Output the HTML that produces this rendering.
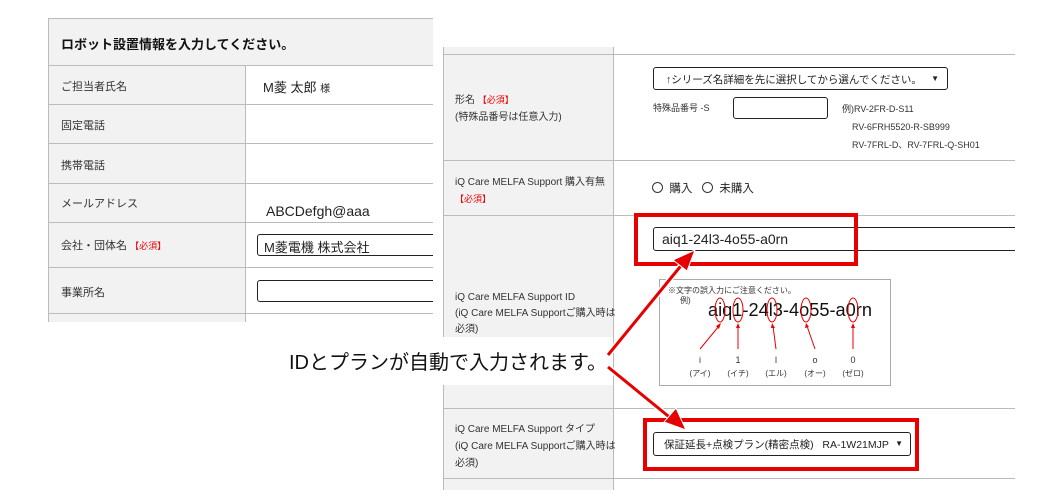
<!DOCTYPE html>
<html><head><meta charset="utf-8"><style>
*{margin:0;padding:0;box-sizing:border-box}
body{width:1060px;height:500px;background:#fff;position:relative;overflow:hidden;font-family:"Liberation Sans","Noto Sans CJK JP",sans-serif;color:#222}
.a{position:absolute}
.g{background:#f2f2f2}
.hl{position:absolute;height:1px;background:#bbb}
.vl{position:absolute;width:1px;background:#bbb}
.s{font-size:11px;color:#333}
.r{color:#e00;font-size:9px}
.box{position:absolute;border:1px solid #222;border-radius:3px;background:#fff}
.red{position:absolute;border:4px solid #e60000}
.clip{position:absolute;overflow:hidden}
</style></head><body>
<!-- left panel -->
<div class="clip" style="left:0;top:0;width:433px;height:322px">
<div class="a g" style="left:48px;top:18px;width:385px;height:304px"></div>
<div class="a" style="left:246px;top:65px;width:187px;height:257px;background:#fff"></div>
<div class="a" style="left:48px;top:18px;width:385px;height:1px;background:#bbb"></div>
<div class="vl" style="left:48px;top:18px;height:304px"></div>
<div class="vl" style="left:245px;top:65px;height:257px"></div>
<div class="hl" style="left:48px;top:65px;width:385px"></div>
<div class="hl" style="left:48px;top:104px;width:385px"></div>
<div class="hl" style="left:48px;top:143px;width:385px"></div>
<div class="hl" style="left:48px;top:183px;width:385px"></div>
<div class="hl" style="left:48px;top:222px;width:385px"></div>
<div class="hl" style="left:48px;top:267px;width:385px"></div>
<div class="hl" style="left:48px;top:313px;width:385px"></div>
<div class="a" style="left:61px;top:34px;font-size:13px;font-weight:bold;color:#111">ロボット設置情報を入力してください。</div>
<div class="a s" style="left:61px;top:78px">ご担当者氏名</div>
<div class="a" style="left:263px;top:77px;font-size:13px">M菱 太郎 <span style="font-size:10px">様</span></div>
<div class="a s" style="left:61px;top:117px">固定電話</div>
<div class="a s" style="left:61px;top:157px">携帯電話</div>
<div class="a s" style="left:61px;top:195px">メールアドレス</div>
<div class="a" style="left:266px;top:203px;font-size:14px">ABCDefgh@aaa</div>
<div class="a s" style="left:61px;top:237px">会社・団体名 <span class="r">【必須】</span></div>
<div class="box" style="left:257px;top:234px;width:230px;height:22px;font-size:13px;padding:2px 6px">M菱電機 株式会社</div>
<div class="a s" style="left:61px;top:284px">事業所名</div>
<div class="box" style="left:257px;top:280px;width:230px;height:22px"></div>
</div>

<!-- right panel -->
<div class="clip" style="left:0;top:0;width:1015px;height:500px">
<div class="a g" style="left:443px;top:47px;width:170px;height:443px"></div>
<div class="vl" style="left:443px;top:47px;height:443px"></div>
<div class="vl" style="left:613px;top:47px;height:443px"></div>
<div class="hl" style="left:443px;top:54px;width:572px"></div>
<div class="hl" style="left:443px;top:160px;width:572px"></div>
<div class="hl" style="left:443px;top:215px;width:572px"></div>
<div class="hl" style="left:443px;top:408px;width:572px"></div>
<div class="hl" style="left:443px;top:478px;width:572px"></div>

<div class="a" style="left:455px;top:92px;font-size:10px;line-height:17px;color:#333">形名 <span class="r">【必須】</span><br>(特殊品番号は任意入力)</div>
<div class="box" style="left:653px;top:67px;width:295px;height:23px;font-size:10.5px;padding:4px 12px">↑シリーズ名詳細を先に選択してから選んでください。<span style="position:absolute;right:8px;top:6px;font-size:8px">▼</span></div>
<div class="a" style="left:653px;top:101px;font-size:9px;color:#333">特殊品番号 -S</div>
<div class="box" style="left:733px;top:97px;width:95px;height:22px"></div>
<div class="a" style="left:842px;top:100px;font-size:9px;line-height:18px;color:#333">例)RV-2FR-D-S11<br>&nbsp;&nbsp;&nbsp;&nbsp;RV-6FRH5520-R-SB999<br>&nbsp;&nbsp;&nbsp;&nbsp;RV-7FRL-D、RV-7FRL-Q-SH01</div>

<div class="a" style="left:455px;top:174px;font-size:10px;line-height:17px;color:#333">iQ Care MELFA Support 購入有無<br><span class="r">【必須】</span></div>
<div class="a" style="left:652px;top:180px;font-size:11.5px;color:#222"><span style="display:inline-block;width:11px;height:11px;border:1px solid #333;border-radius:50%;vertical-align:-1px"></span>&nbsp; 購入 &nbsp;&nbsp;<span style="display:inline-block;width:11px;height:11px;border:1px solid #333;border-radius:50%;vertical-align:-1px"></span>&nbsp; 未購入</div>

<div class="box" style="left:653px;top:227px;width:400px;height:24px;font-size:14px;padding:3px 8px;border-radius:3px 0 0 3px">aiq1-24l3-4o55-a0rn</div>
</div>
<div class="red" style="left:634px;top:213px;width:224px;height:53px"></div>

<div class="a" style="left:455px;top:290px;font-size:10px;line-height:16px;color:#333">iQ Care MELFA Support ID<br>(iQ Care MELFA Supportご購入時は<br>必須)</div>

<div class="a" style="left:659px;top:279px;width:232px;height:107px;border:1px solid #aaa;background:#fff"></div>
<div class="a" style="left:668px;top:285px;font-size:8px;color:#333">※文字の誤入力にご注意ください。</div>
<div class="a" style="left:680px;top:295px;font-size:8px;color:#333">例)</div>
<svg class="a" style="left:659px;top:279px" width="232" height="107">
<text x="49" y="37" font-family="Liberation Sans,sans-serif" font-size="18" fill="#111" textLength="164" lengthAdjust="spacingAndGlyphs">aiq1-24l3-4o55-a0rn</text>
<g fill="none" stroke="#e00" stroke-width="1">
<ellipse cx="61" cy="31" rx="5" ry="12"/><ellipse cx="79" cy="31" rx="5" ry="12"/><ellipse cx="113" cy="31" rx="5" ry="12"/><ellipse cx="147" cy="31" rx="5" ry="12"/><ellipse cx="194" cy="31" rx="5" ry="12"/>
<line x1="41" y1="70" x2="60" y2="47"/><line x1="79" y1="70" x2="79" y2="47"/><line x1="117" y1="70" x2="114" y2="47"/><line x1="156" y1="70" x2="148" y2="47"/><line x1="194" y1="70" x2="194" y2="47"/>
</g>
<g fill="#e00"><polygon points="62,44 57,47 60,50"/><polygon points="79,44 77,49 81,49"/><polygon points="113,44 112,49 116,49"/><polygon points="147,44 146,49 150,48"/><polygon points="194,44 192,49 196,49"/></g>
<g font-family="Liberation Sans,Noto Sans CJK JP,sans-serif" font-size="9" fill="#333" text-anchor="middle">
<text x="41" y="84">i</text><text x="79" y="84">1</text><text x="117" y="84">l</text><text x="156" y="84">o</text><text x="194" y="84">0</text>
<text x="41" y="97" font-size="8">(アイ)</text><text x="79" y="97" font-size="8">(イチ)</text><text x="117" y="97" font-size="8">(エル)</text><text x="156" y="97" font-size="8">(オー)</text><text x="194" y="97" font-size="8">(ゼロ)</text>
</g></svg>

<div class="a" style="left:455px;top:421px;font-size:10px;line-height:17px;color:#333">iQ Care MELFA Support タイプ<br>(iQ Care MELFA Supportご購入時は<br>必須)</div>
<div class="box" style="left:653px;top:432px;width:258px;height:24px;font-size:10.5px;padding:4px 10px">保証延長+点検プラン(精密点検)&nbsp;&nbsp; RA-1W21MJP<span style="position:absolute;right:7px;top:6px;font-size:8px">▼</span></div>
<div class="red" style="left:643px;top:418px;width:276px;height:53px"></div>

<!-- callout -->
<div class="a" style="left:283px;top:337px;width:330px;height:48px;background:#fff"></div>
<div class="a" style="left:289px;top:346px;font-size:20px;color:#111;white-space:nowrap">IDとプランが自動で入力されます。</div>
<svg class="a" style="left:0;top:0" width="1060" height="500">
<g stroke="#fff" stroke-width="6" fill="none"><line x1="608" y1="355" x2="684" y2="262"/><line x1="608" y1="367" x2="673" y2="420"/></g>
<g stroke="#e60000" stroke-width="3" fill="none"><line x1="608" y1="355" x2="684" y2="262"/><line x1="608" y1="367" x2="673" y2="420"/></g>
<polygon points="695,250 673,260 687,271" fill="#e60000" stroke="#fff" stroke-width="1"/>
<polygon points="686,430 664,422 676,408" fill="#e60000" stroke="#fff" stroke-width="1"/>
</svg>
</body></html>
